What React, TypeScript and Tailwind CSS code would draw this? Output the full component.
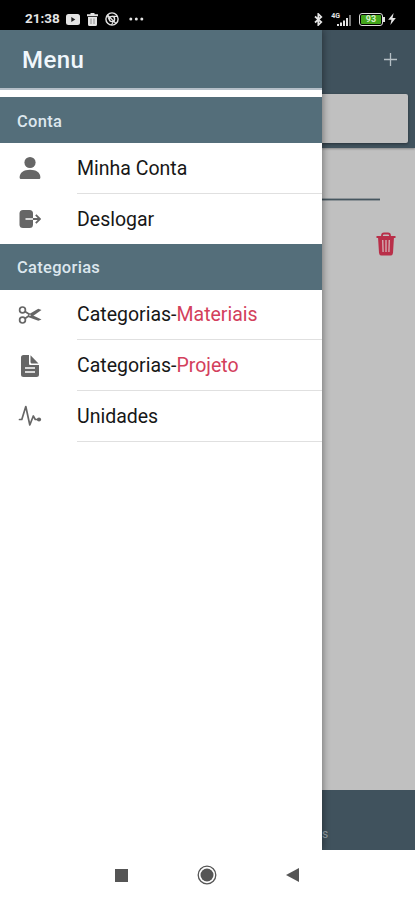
import type { ReactNode } from "react";

function StatusBar() {
  return (
    <header className="flex h-[30px] shrink-0 items-center bg-black pt-[8px] pr-[19px] pl-[25px] text-[#e4e4e4]">
      <span className="w-[36px] text-[13.500px] leading-none font-bold whitespace-nowrap">21:38</span>

      <svg className="ml-[5px] h-[11px] w-[14px]" viewBox="0 0 14 11">
        <rect width="14" height="11" rx="2.5" fill="currentColor" />
        <path d="M5.3 3v5l4-2.5z" fill="#222" />
      </svg>

      <svg className="ml-[7px] h-[13px] w-[11px]" viewBox="0 0 11 13" fill="currentColor">
        <path d="M3.5 0h4v1.3H11v1.9H0V1.3h3.5zM1 4h9v7.5A1.5 1.5 0 0 1 8.5 13h-6A1.5 1.5 0 0 1 1 11.500z" />
        <path d="M4 5.500v5.500M7 5.500v5.500" stroke="#777" strokeWidth="0.8" />
      </svg>

      <svg className="ml-[7px] h-[14px] w-[14px]" viewBox="0 0 14 14" fill="none" stroke="currentColor" strokeWidth="1.4">
        <circle cx="7" cy="7" r="6.100" />
        <circle cx="7" cy="7" r="2.600" />
        <path d="M2.500 3l8.500 8.500M7 4.400h5M4.600 8.200L2.400 4M8.500 9.200L6.500 13" strokeWidth="1.100" />
      </svg>

      <svg className="ml-[10px] h-[4px] w-[15px]" viewBox="0 0 15 4" fill="currentColor">
        <circle cx="1.800" cy="2" r="1.500" />
        <circle cx="7.300" cy="2" r="1.500" />
        <circle cx="12.800" cy="2" r="1.500" />
      </svg>

      <svg className="ml-auto h-[13px] w-[9px]" viewBox="0 0 9 13" fill="none" stroke="currentColor" strokeWidth="1.700">
        <path d="M1 3.500l6.300 5.500-3 3V1l3 3L1 9.500" />
      </svg>

      <div className="ml-[8px] flex h-[14px] w-[22px] items-end">
        <span className="mb-[6px] w-[9px] text-right text-[7px] leading-none font-bold">4G</span>
        <svg className="-ml-[3px] h-[11px] w-[14px] shrink-0" viewBox="0 0 14 11" fill="currentColor">
          <path d="M0 9h2v2H0zM3 7.500h2V11H3zM6 5.500h2V11H6zM9 3h2v8H9z" />
          <path d="M12 0h2v11h-2z" fill="#777" />
        </svg>
      </div>

      <div className="ml-[6px] flex items-center">
        <div className="flex h-[13px] w-[24px] items-center justify-center rounded-[3px] border-[1.5px] border-[#dedede] p-px">
          <span className="flex h-full w-full items-center justify-center rounded-[1px] bg-[#43a51b] text-[9px] leading-none font-bold text-[#d8f0cd]">
            93
          </span>
        </div>
        <span className="h-[5px] w-[2px] bg-[#dedede]" />
      </div>

      <svg className="ml-[3px] h-[12px] w-[8px]" viewBox="0 0 7 11" fill="currentColor">
        <path d="M5 0L0 6.300h3L2 11l5-6.500H4z" />
      </svg>
    </header>
  );
}

function PersonIcon() {
  return (
    <svg className="h-[24px] w-[22px]" viewBox="0 0 22 24" fill="currentColor">
      <circle cx="11" cy="6.500" r="5.600" />
      <path d="M.6 21.500C.6 16.500 5 13.800 11 13.800s10.400 2.700 10.400 7.700c0 .9-.5 1.500-1.300 1.500H1.900C1.100 23 .6 22.400.6 21.500z" />
    </svg>
  );
}

function ExitIcon() {
  return (
    <svg className="h-[18px] w-[22px]" viewBox="0 0 22 18">
      <rect x=".5" y="0" width="13.500" height="18" rx="3.500" fill="currentColor" />
      <path d="M6.500 9H14" stroke="white" strokeWidth="1.500" />
      <path d="M14 9h6.800M16.800 4.800L21 9l-4.200 4.200" fill="none" stroke="currentColor" strokeWidth="1.800" />
    </svg>
  );
}

function ScissorsIcon() {
  return (
    <svg className="h-[18px] w-[24px]" viewBox="0 0 24 18">
      <g fill="none" stroke="currentColor" strokeWidth="1.700">
        <circle cx="4.500" cy="3.900" r="2.900" />
        <circle cx="4.500" cy="14.100" r="2.900" />
        <path d="M7 5.500l5 3.200M7 12.500l5-3.500" />
      </g>
      <path d="M10 8.800L20.300 2.800l3.200 1.200L13.500 11z" fill="currentColor" />
      <path d="M11 7.500l12.500 6-3.200 1.200L10 11z" fill="currentColor" />
      <circle cx="12" cy="9.300" r=".7" fill="white" />
    </svg>
  );
}

function DocumentIcon() {
  return (
    <svg className="h-[24px] w-[20px]" viewBox="0 0 20 24" fill="currentColor">
      <path d="M3.500 1H9v8.500c0 1 .6 1.500 1.500 1.500H19v9.500a2.500 2.500 0 0 1-2.500 2.500h-13A2.500 2.500 0 0 1 1 20.500v-17A2.500 2.500 0 0 1 3.500 1z" />
      <path d="M10.500 1.300L18.500 9.500H12c-.9 0-1.500-.6-1.500-1.500z" />
      <path d="M5 14h10M5 18h10" stroke="white" strokeWidth="1.300" />
    </svg>
  );
}

function PulseIcon() {
  return (
    <svg className="h-[22px] w-[24px]" viewBox="0 0 24 22">
      <path
        d="M1.500 14.500h2.300L7.800 1.500l4 18.500 3.500-9 2 3.500H21"
        fill="none"
        stroke="currentColor"
        strokeWidth="1.700"
        strokeLinejoin="round"
        strokeLinecap="round"
      />
      <circle cx="21" cy="14.500" r="2.100" fill="currentColor" />
    </svg>
  );
}

function SectionTitle({ children }: { children: ReactNode }) {
  return (
    <h2 className="flex h-[46px] shrink-0 items-center bg-[#546e7a] pt-[4px] pl-[17px] text-[16.500px] font-medium tracking-[0.3px] text-[#dce7ee]">
      {children}
    </h2>
  );
}

interface MenuItemProps {
  icon: ReactNode;
  label: string;
  highlight?: string;
  last?: boolean;
}

function MenuItem({ icon, label, highlight, last = false }: MenuItemProps) {
  return (
    <li className={last ? "flex h-[50px]" : "flex h-[50.700px]"}>
      <span className="flex w-[77px] items-center pl-[18px] text-[#666]">
        <span className="flex w-[24px] justify-center">{icon}</span>
      </span>
      <span
        className={
          last
            ? "flex flex-1 items-center pt-px text-[19.500px] text-[#171717]"
            : "flex flex-1 items-center border-b border-[#e0e0e0] pt-px text-[19.500px] text-[#171717]"
        }
      >
        {label}
        {highlight && <span className="text-[#d3405c]">{highlight}</span>}
      </span>
    </li>
  );
}

function Drawer() {
  return (
    <aside className="relative z-10 flex w-[322px] shrink-0 flex-col bg-white shadow-[1px_0_7px_rgba(0,0,0,0.4)]">
      <div className="flex h-[60px] shrink-0 items-center border-b-2 border-[#b5bfc8] bg-[#546e7a] pl-[22px]">
        <h1 className="pt-px text-[24px] font-medium tracking-[0.4px] text-[#f0f7fc]">Menu</h1>
      </div>

      <nav className="pt-[7px]">
        <SectionTitle>Conta</SectionTitle>
        <ul>
          <MenuItem icon={<PersonIcon />} label="Minha Conta" />
          <MenuItem icon={<ExitIcon />} label="Deslogar" last />
        </ul>
        <SectionTitle>Categorias</SectionTitle>
        <ul>
          <MenuItem icon={<ScissorsIcon />} label="Categorias-" highlight="Materiais" />
          <MenuItem icon={<DocumentIcon />} label="Categorias-" highlight="Projeto" />
          <MenuItem icon={<PulseIcon />} label="Unidades" />
        </ul>
      </nav>
    </aside>
  );
}

function TrashIcon() {
  return (
    <svg className="h-[24px] w-[20px]" viewBox="0 0 20 24" fill="none" stroke="#b92f49">
      <path d="M.5 5h19" strokeWidth="2" />
      <path d="M6 5V3.500Q6 1.500 8 1.500h4q2 0 2 2V5" strokeWidth="1.800" />
      <path d="M2 5h16l-1 16q-.2 2.500-2.500 2.500h-9Q3.200 23.500 3 21z" fill="#b92f49" stroke="none" />
      <path d="M6.700 8l.4 12M10 8v12M13.300 8l-.4 12" stroke="#d3a9b0" strokeWidth="1.400" />
    </svg>
  );
}

function DimmedPage() {
  return (
    <main className="flex min-w-0 flex-1 flex-col bg-[#c0c0c0]">
      <div className="flex h-[118px] shrink-0 flex-col bg-[#40525d] shadow-[0_1px_2px_rgba(0,0,0,0.3)]">
        <div className="flex h-[64px] items-center justify-end pr-[18px] pb-[5px]">
          <svg className="h-[13px] w-[13px]" viewBox="0 0 13 13" stroke="#b6c0c5" strokeWidth="1.300">
            <path d="M6.500 0v13M0 6.500h13" />
          </svg>
        </div>
        <div className="mr-[7px] h-[49px] rounded-r-[2px] bg-[#c0c0c0] shadow-[0_1px_3px_rgba(0,0,0,0.4)]" />
      </div>

      <div className="mt-[50px] mr-[35px] h-[3px] border-y border-[#8d9498] bg-[#46565f]" />
      <div className="mt-[31px] flex justify-end pr-[19px]">
        <TrashIcon />
      </div>

      <footer className="mt-auto flex h-[60px] items-end bg-[#40525d] pb-[8px] text-[12px] leading-[16px] text-[#94a0a7]">
        s
      </footer>
    </main>
  );
}

function NavigationBar() {
  return (
    <footer className="flex h-[50px] shrink-0 items-center bg-white pl-[115px] text-[#555]">
      <span className="h-[13px] w-[13px] bg-[#555]" />
      <svg className="ml-[69px] h-[20px] w-[20px]" viewBox="0 0 20 20">
        <circle cx="10" cy="10" r="8.800" fill="none" stroke="currentColor" strokeWidth="1.300" />
        <circle cx="10" cy="10" r="6.500" fill="currentColor" />
      </svg>
      <svg className="ml-[69px] h-[14px] w-[13px]" viewBox="0 0 13 14" fill="currentColor">
        <path d="M13 0v14L0 7z" />
      </svg>
    </footer>
  );
}

export default function App() {
  return (
    <div className="flex h-[900px] w-[415px] flex-col overflow-hidden bg-white font-[Roboto,sans-serif]">
      <StatusBar />
      <div className="flex min-h-0 flex-1 overflow-hidden">
        <Drawer />
        <DimmedPage />
      </div>
      <NavigationBar />
    </div>
  );
}
